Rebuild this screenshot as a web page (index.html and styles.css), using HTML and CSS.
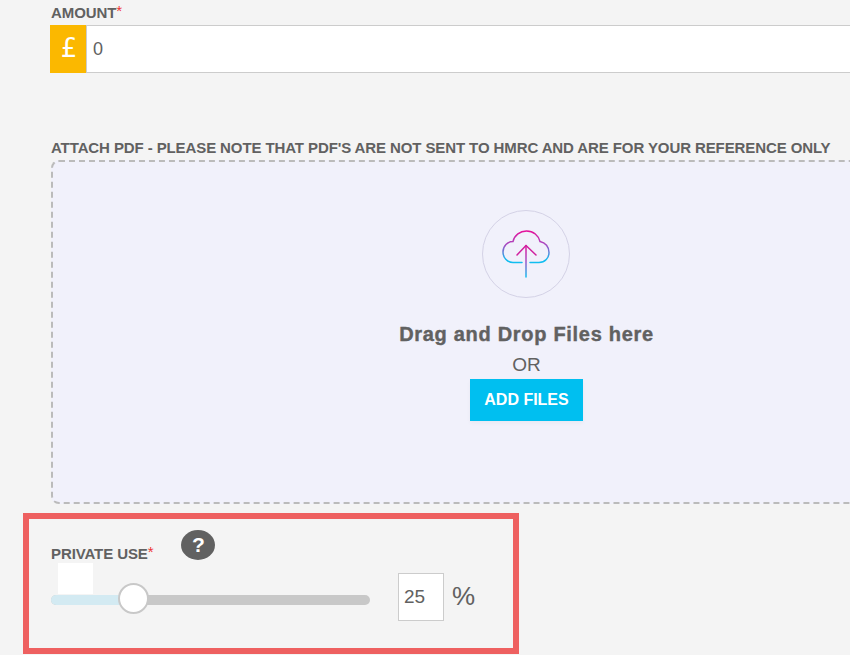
FILE: index.html
```html
<!DOCTYPE html>
<html lang="en">
<head>
<meta charset="utf-8">
<title>Expense</title>
<link rel="stylesheet" href="styles.css">
</head>
<body>
<main class="page">
  <section class="field amount">
    <label class="label">AMOUNT<span class="req">*</span></label>
    <div class="amount-row">
      <span class="prefix">£</span>
      <div class="amount-input">0</div>
    </div>
  </section>
  <section class="field attach">
    <label class="label">ATTACH PDF - PLEASE NOTE THAT PDF'S ARE NOT SENT TO HMRC AND ARE FOR YOUR REFERENCE ONLY</label>
    <div class="dropzone">
      <div class="cloud-circle">
        <svg class="cloud" width="50" height="50" viewBox="0 0 50 50" fill="none">
          <defs>
            <linearGradient id="cloud-grad" x1="0" y1="2" x2="0" y2="34" gradientUnits="userSpaceOnUse">
              <stop offset="0" stop-color="#e5109a"/>
              <stop offset="0.45" stop-color="#a24fc4"/>
              <stop offset="0.9" stop-color="#10bdf0"/>
            </linearGradient>
            <linearGradient id="arrow-grad" x1="0" y1="16" x2="0" y2="48" gradientUnits="userSpaceOnUse">
              <stop offset="0" stop-color="#e5109a"/>
              <stop offset="0.5" stop-color="#a24fc4"/>
              <stop offset="1" stop-color="#10bdf0"/>
            </linearGradient>
          </defs>
          <path d="M21 33.5 H12 C6 33.500 2 28.500 2 23 C2 17 6.500 12.500 12 12.500 C13.500 6 19 2 25.500 2 C32.500 2 37.500 6.500 39 12.500 C44.500 13.500 48 18 48 23.500 C48 29 44 33.500 38 33.500 H29" stroke="url(#cloud-grad)" stroke-width="1.500" stroke-linecap="round"/>
          <path d="M25 48 V16.500" stroke="url(#arrow-grad)" stroke-width="1.500" stroke-linecap="round"/>
          <path d="M16 26 L25 16.500 L35 26" stroke="#d0209f" stroke-width="1.500" stroke-linecap="round" stroke-linejoin="round"/>
        </svg>
      </div>
      <p class="drop-title">Drag and Drop Files here</p>
      <p class="drop-or">OR</p>
      <button class="add-btn" type="button">ADD FILES</button>
    </div>
  </section>
  <section class="private-box">
    <div class="private-head">
      <label class="label">PRIVATE USE<span class="req">*</span></label>
      <span class="help">?</span>
    </div>
    <div class="slider-row">
      <div class="slider">
        <span class="slider-tip"></span>
        <span class="slider-fill"></span>
        <span class="slider-thumb"></span>
      </div>
      <div class="pct-input">25</div>
      <span class="pct">%</span>
    </div>
  </section>
</main>
</body>
</html>
```
FILE: styles.css
```css
html, body {
  margin: 0;
  height: 655px;
  overflow: hidden;
  background: #f4f4f4;
}
.page {
  width: 850px;
  height: 655px;
  overflow: hidden;
  font-family: "Liberation Sans", Arial, sans-serif;
  color: #616161;
  display: flex;
  flex-direction: column;
}
.label {
  display: block;
  font-size: 15px;
  letter-spacing: -0.1px;
  font-weight: 700;
  line-height: 16px;
  color: #616161;
  white-space: nowrap;
}
.req {
  color: #e33;
  font-weight: 400;
  position: relative;
  top: -2px;
}
.amount {
  padding: 5px 0 0 51px;
}
.amount-row {
  display: flex;
  width: 1000px;
  height: 48px;
  margin: 4px 0 0 -1px;
}
.prefix {
  width: 36px;
  background: #fbb800;
  color: #fff;
  font-size: 26px;
  line-height: 46px;
  text-indent: 2px;
  text-align: center;
  flex: none;
  font-family: "DejaVu Sans", sans-serif;
}
.amount-input {
  flex: 1;
  background: #fff;
  border: 1px solid #ccc;
  font-size: 18px;
  line-height: 46px;
  padding-left: 6px;
}
.attach {
  padding: 67px 0 0 51px;
}
.dropzone {
  box-sizing: border-box;
  width: 951px;
  height: 344px;
  margin-top: 4px;
  background: #f1f1fb;
  border: 2px dashed #bbb;
  border-radius: 8px;
  display: flex;
  flex-direction: column;
  align-items: center;
  padding-top: 48px;
}
.cloud-circle {
  box-sizing: border-box;
  width: 88px;
  height: 88px;
  margin-right: 1px;
  border: 1px solid #d4d2e6;
  border-radius: 50%;
  display: flex;
  align-items: center;
  justify-content: center;
}
.drop-title {
  margin: 24px 0 0;
  font-size: 20px;
  line-height: 24px;
  font-weight: 700;
  letter-spacing: 0.7px;
  -webkit-text-stroke: 0.4px #616161;
}
.drop-or {
  margin: 9px 0 0;
  font-size: 19px;
  line-height: 20px;
}
.add-btn {
  margin-top: 4px;
  width: 113px;
  height: 42px;
  padding: 0;
  border: 0;
  background: #00bff0;
  color: #fff;
  font: 700 16px "Liberation Sans", Arial, sans-serif;
  box-shadow: 0 2px 4px rgba(0, 0, 0, 0.04);
}
.private-box {
  box-sizing: border-box;
  width: 496px;
  height: 141px;
  margin: 9px 0 0 23px;
  border: 6px solid #ee6060;
  padding: 11px 0 0 22px;
  flex: none;
}
.private-head {
  display: flex;
  align-items: flex-start;
  gap: 28px;
}
.private-head .label {
  margin-top: 16px;
}
.help {
  width: 34px;
  height: 30px;
  border-radius: 50%;
  background: #616161;
  color: #fff;
  font-size: 21px;
  font-weight: 700;
  line-height: 30px;
  text-align: center;
}
.slider-row {
  display: flex;
  align-items: flex-start;
}
.slider {
  position: relative;
  width: 319px;
  height: 10px;
  margin-top: 33px;
  background: #c8c8c8;
  border-radius: 5px;
}
.slider-fill {
  display: block;
  width: 71px;
  height: 10px;
  background: #d3eaf2;
  border-radius: 5px 0 0 5px;
}
.slider-tip {
  position: absolute;
  left: 7px;
  top: -32px;
  width: 35px;
  height: 31px;
  background: #fff;
}
.slider-thumb {
  position: absolute;
  box-sizing: border-box;
  left: 67px;
  top: -12px;
  width: 31px;
  height: 31px;
  background: #fff;
  border: 2px solid #c8c8c8;
  border-radius: 50%;
}
.pct-input {
  box-sizing: border-box;
  width: 46px;
  height: 48px;
  margin: 11px 0 0 28px;
  border: 1px solid #ccc;
  background: #fff;
  font-size: 19px;
  line-height: 46px;
  padding-left: 5px;
}
.pct {
  font-size: 26px;
  line-height: 46px;
  margin: 11px 0 0 8px;
}
```
